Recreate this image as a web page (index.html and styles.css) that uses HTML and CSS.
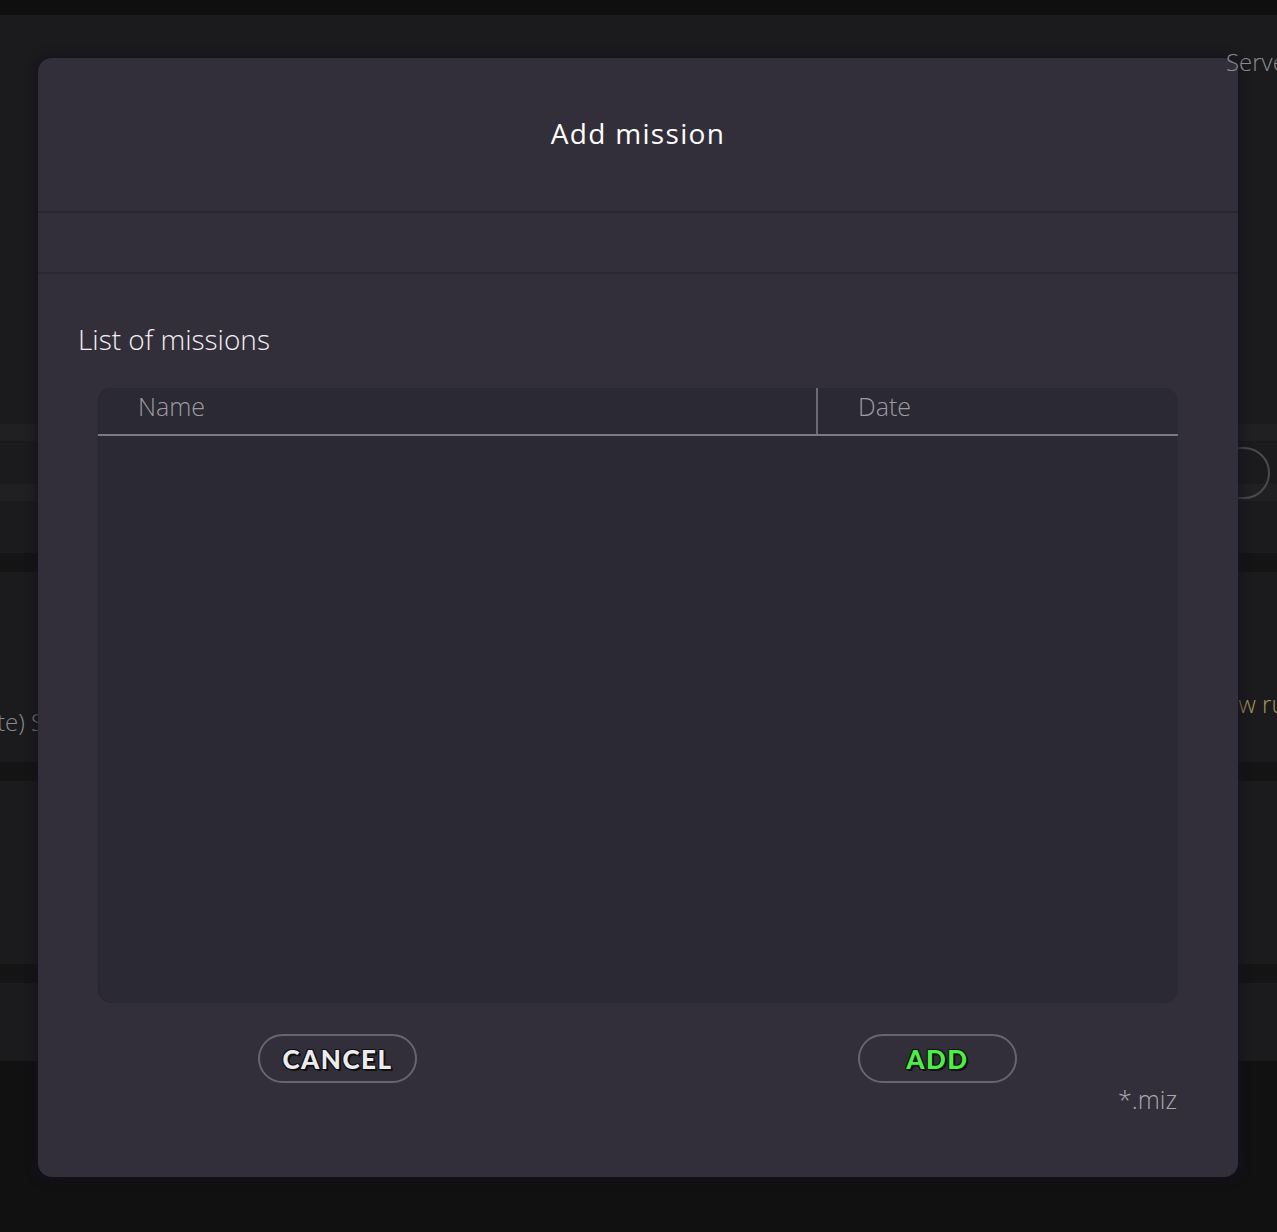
FILE: index.html
```html
<!DOCTYPE html>
<html lang="en">
<head>
    <meta charset="UTF-8">
    <meta name="viewport" content="width=device-width, initial-scale=1.0">
    <link rel="stylesheet" href="styles.css">
    <title>Add mission</title>
</head>
<body>
    <!-- Dimmed app behind the dialog -->
    <div class="app">
        <div class="topbar"></div>
        <div class="panel panel-servers">
            <div class="strips">
                <div class="strip"></div>
                <div class="strip"></div>
            </div>
            <span class="round-btn"></span>
        </div>
        <div class="gap"></div>
        <div class="panel panel-mission">
            <span class="bg-text bg-left">(Remote)&nbsp;</span>
            <span class="bg-text bg-left-end">Server</span>
            <span class="bg-text yellow">New run</span>
        </div>
        <div class="gap"></div>
        <div class="panel panel-empty"></div>
        <div class="gap"></div>
        <div class="panel panel-small"></div>
    </div>

    <div class="overlay">
        <div class="modal">
            <div class="modal-header">
                <h2>Add mission</h2>
            </div>
            <div class="modal-tabs"></div>

            <div class="modal-body">
                <h3 class="section-title">List of missions</h3>

                <div class="table">
                    <div class="table-head">
                        <div class="col col-name">Name</div>
                        <div class="col col-date">Date</div>
                    </div>
                    <div class="table-body"></div>
                </div>

                <div class="actions">
                    <button class="btn btn-cancel">CANCEL</button>
                    <button class="btn btn-add">ADD</button>
                </div>
                <div class="file-hint">*.miz</div>
            </div>
        </div>
    </div>

    <span class="servers-label">Servers</span>
</body>
</html>
```

FILE: styles.css
```css
body {
    margin: 0;
    background-color: #111112;
    font-family: "Open Sans", "Noto Sans", sans-serif;
    height: 1232px;
    overflow: hidden;
    position: relative;
}

/* Background app */
.app {
    display: flex;
    flex-direction: column;
}

.topbar {
    height: 15px;
    background-color: #0f0f10;
}

.panel {
    background-color: #1b1b1d;
    position: relative;
}

.gap {
    height: 19px;
    background-color: #141415;
}

.panel-servers {
    height: 538px;
}

.servers-label {
    position: absolute;
    left: 1226px;
    top: 48px;
    font-size: 24px;
    font-weight: 300;
    line-height: 28px;
    color: #8a8a8e;
    white-space: nowrap;
}

.strips {
    display: flex;
    flex-direction: column;
    gap: 43px;
    padding-top: 409px;
}

.strip {
    height: 17px;
    background-color: #202022;
}

.round-btn {
    position: absolute;
    left: 1190px;
    top: 432px;
    width: 76px;
    height: 48px;
    border: 2px solid #4a4a4f;
    border-radius: 26px;
}

.panel-mission {
    height: 190px;
}

.bg-text {
    position: absolute;
    top: 136px;
    font-size: 24px;
    font-weight: 300;
    line-height: 28px;
    color: #8a8a8e;
    white-space: nowrap;
}

.bg-left {
    right: calc(100% - 31px);
}

.bg-left-end {
    left: 31px;
}

.bg-text.yellow {
    left: 1208px;
    top: 118px;
    color: #a8965a;
}

.panel-empty {
    height: 183px;
}

.panel-small {
    height: 78px;
}

/* Dialog */
.overlay {
    position: absolute;
    top: 0;
    left: 0;
    right: 0;
    bottom: 0;
    display: flex;
    justify-content: flex-start;
    padding: 58px 0 0 38px;
}

.modal {
    width: 1200px;
    height: 1119px;
    background-color: #322f3a;
    border-radius: 14px;
    box-shadow: 0 0 10px 3px rgba(20, 18, 30, 0.8);
    display: flex;
    flex-direction: column;
    color: #fff;
}

.modal-header {
    height: 153px;
    border-bottom: 2px solid #29272f;
}

.modal-header h2 {
    margin: 0;
    padding-top: 57px;
    text-align: center;
    font-size: 28px;
    font-weight: 400;
    line-height: 36px;
    letter-spacing: 1.3px;
}

.modal-tabs {
    height: 59px;
    border-bottom: 2px solid #29272f;
}

.modal-body {
    padding: 47px 60px 0;
    display: flex;
    flex-direction: column;
}

.section-title {
    margin: 0 0 31px -20px;
    font-size: 28px;
    font-weight: 300;
    line-height: 36px;
    color: #f0f0f2;
}

.table {
    height: 615px;
    background-color: #2b2933;
    border-radius: 14px;
    box-shadow: inset 1px 0 0 #27252e;
    display: flex;
    flex-direction: column;
    overflow: hidden;
}

.table-head {
    display: flex;
    height: 46px;
    border-bottom: 2px solid #7b7a82;
}

.col {
    font-size: 25px;
    font-weight: 300;
    color: #9c9ba2;
    line-height: 36px;
    padding-left: 40px;
}

.col-name {
    width: 678px;
    border-right: 2px solid #6c6b73;
}

.col-date {
    flex: 1;
}

.actions {
    display: flex;
    justify-content: space-between;
    padding: 31px 161px 0 160px;
}

.btn {
    width: 159px;
    height: 49px;
    background: transparent;
    border: 2px solid #66656d;
    border-radius: 25px;
    font-family: Lato, "Open Sans", sans-serif;
    font-weight: 900;
    font-size: 26px;
    letter-spacing: 1.5px;
    padding: 0;
    cursor: pointer;
    text-shadow: 1px 1px 0 #111, -1px 1px 0 #111, 1px -1px 0 #111, -1px -1px 0 #111, 2px 2px 0 #111;
}

.btn-cancel {
    color: #ebebf0;
}

.btn-add {
    color: #4bef45;
}

.file-hint {
    align-self: flex-end;
    font-size: 25px;
    font-weight: 300;
    line-height: 32px;
    color: #a9a8ae;
    margin-right: 1px;
}
```
